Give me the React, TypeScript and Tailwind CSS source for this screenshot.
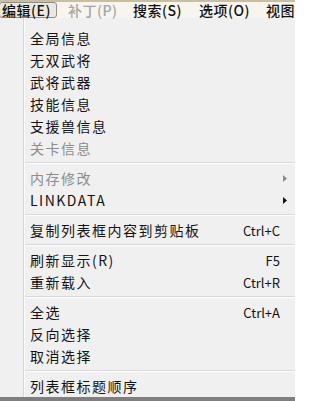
const FONT = { fontFamily: '"Noto Sans CJK SC", "Noto Sans", sans-serif' };

type Item =
  | { sep: true }
  | { label: string; key?: string; disabled?: boolean; sub?: boolean; sep?: false };

const ITEMS: Item[] = [
  { label: "全局信息" },
  { label: "无双武将" },
  { label: "武将武器" },
  { label: "技能信息" },
  { label: "支援兽信息" },
  { label: "关卡信息", disabled: true },
  { sep: true },
  { label: "内存修改", disabled: true, sub: true },
  { label: "LINKDATA", sub: true },
  { sep: true },
  { label: "复制列表框内容到剪贴板", key: "Ctrl+C" },
  { sep: true },
  { label: "刷新显示(R)", key: "F5" },
  { label: "重新载入", key: "Ctrl+R" },
  { sep: true },
  { label: "全选", key: "Ctrl+A" },
  { label: "反向选择" },
  { label: "取消选择" },
  { sep: true },
  { label: "列表框标题顺序" },
];

const MENUBAR = [
  { label: "编辑(E)", w: "w-[66px]", active: true },
  { label: "补丁(P)", w: "w-[65px]", disabled: true },
  { label: "搜索(S)", w: "w-[66px]" },
  { label: "选项(O)", w: "w-[67px]" },
  { label: "视图", w: "w-[40px]" },
];

function Arrow({ disabled }: { disabled?: boolean }) {
  return (
    <svg width="4" height="7" viewBox="0 0 4 7" className="shrink-0">
      <path d="M0 0 L4 3.5 L0 7 Z" fill={disabled ? "#8c8c8c" : "#111"} />
    </svg>
  );
}

export default function App() {
  return (
    <div className="w-[295px] h-[401px] overflow-hidden bg-[#f0f0f0] flex flex-col" style={FONT}>
      {/* menu bar */}
      <div className="h-[18px] shrink-0 flex flex-col bg-[#f7f5ee]">
        <div className="h-[2px] bg-[#cbbd9f]" />
        <div className="flex-1 flex items-stretch text-[14px] font-medium leading-none whitespace-nowrap">
          {MENUBAR.map((m) => (
            <div key={m.label} className={`${m.w} shrink-0 flex items-stretch`}>
              <span
                className={`flex items-center px-[2px] tracking-[0.5px] ${
                  m.active
                    ? "border border-[#8e8e8e] rounded-[3px] bg-[#ebe8dc] -ml-[1px] pl-[2px] pr-[5px] text-[#111]"
                    : m.disabled
                    ? "text-[#a5a5a5]"
                    : "text-[#111]"
                }`}
              >
                {m.label}
              </span>
            </div>
          ))}
        </div>
      </div>

      {/* dropdown */}
      <div className="relative flex-1 flex flex-col pt-[9px]">
        <div className="absolute left-[23px] top-0 bottom-0 w-[2px] border-l border-[#d6d6d6] bg-[#fcfcfc] pointer-events-none" />
        {ITEMS.map((it, i) =>
          it.sep ? (
            <div key={i} className="h-[8px] flex flex-col justify-center pl-[23px]">
              <div className="h-[1px] bg-[#d7d7d7]" />
              <div className="h-[1px] bg-white" />
            </div>
          ) : (
            <div key={i} className="h-[22px] flex items-center pl-[30px] pr-[8px] text-[14px] leading-none">
              <span className={`flex-1 tracking-[1.5px] ${it.disabled ? "text-[#8c8c8c]" : "text-[#141414]"}`}>
                {it.label}
              </span>
              {it.key && <span className="text-[13px] text-[#141414] mr-[7px]">{it.key}</span>}
              {it.sub && <Arrow disabled={it.disabled} />}
            </div>
          )
        )}
      </div>
      <div className="h-[4px] shrink-0 bg-[#7f7f7f]" />
    </div>
  );
}
